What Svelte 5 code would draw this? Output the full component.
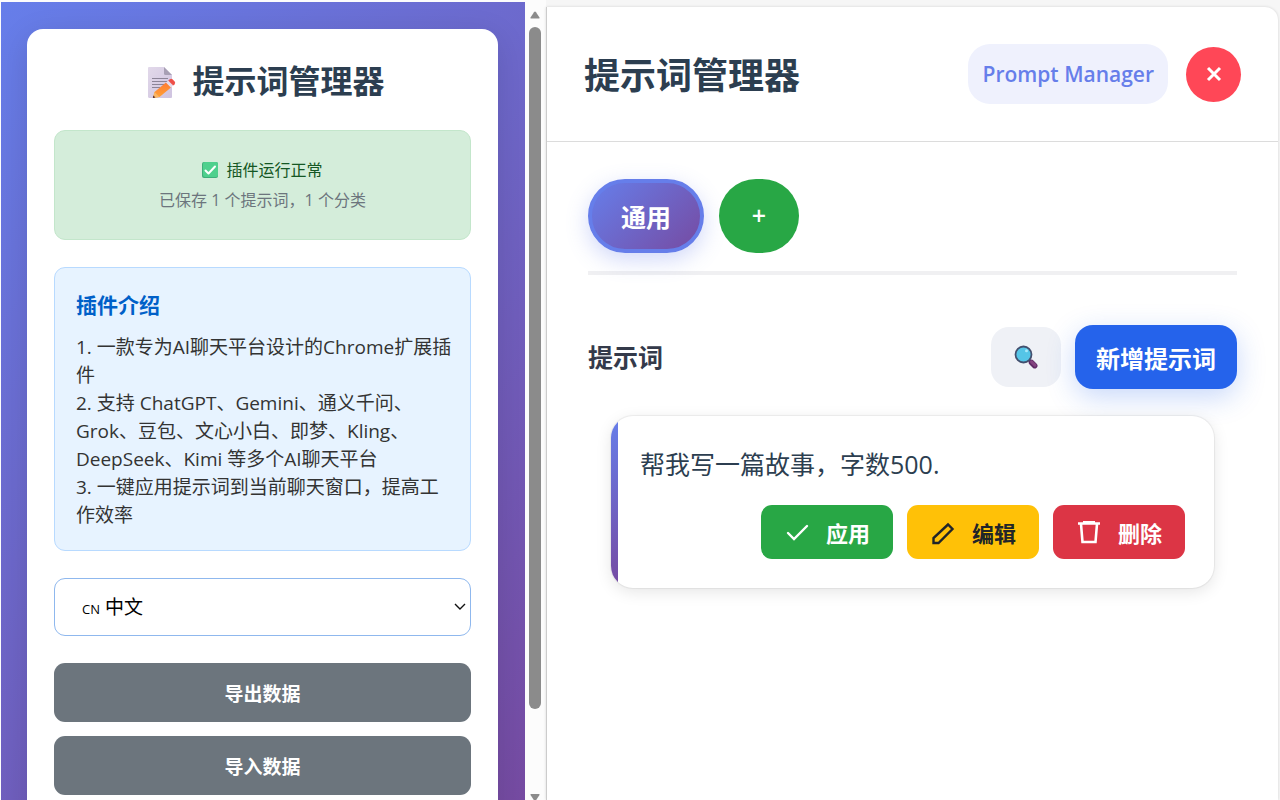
<script>
  const intro = [
    '1. 一款专为AI聊天平台设计的Chrome扩展插件',
    '2. 支持 ChatGPT、Gemini、通义千问、Grok、豆包、文心小白、即梦、Kling、DeepSeek、Kimi 等多个AI聊天平台',
    '3. 一键应用提示词到当前聊天窗口，提高工作效率'
  ];
  const prompts = ['帮我写一篇故事，字数500.'];
  let language = $state('zh');
</script>

<main class="page">
  <section class="popup">
    <div class="backdrop">
      <div class="sheet">
        <h1>
          <svg width="38" height="34" viewBox="-6 -2 38 34" aria-hidden="true">
            <defs>
              <linearGradient id="paper" x1="0" y1="0" x2="1" y2="1">
                <stop offset="0" stop-color="#e2d9ea" />
                <stop offset="1" stop-color="#cfc3e0" />
              </linearGradient>
              <linearGradient id="wood" x1="0" y1="0" x2="0" y2="1">
                <stop offset="0" stop-color="#ff7a35" />
                <stop offset="1" stop-color="#ffa436" />
              </linearGradient>
            </defs>
            <path d="M3 1h15l8 8v22a1 1 0 0 1-1 1H3a2 2 0 0 1-1-1V2a1 1 0 0 1 1-1z" fill="url(#paper)" />
            <path d="M18 1l8 8h-6.500a1.500 1.500 0 0 1-1.500-1.500z" fill="#a79fb4" />
            <path d="M6 12.500h16M6 15.500h16M6 18.500h12M6 21.500h8" stroke="#8c8498" stroke-width="1.200" />
            <path d="M8.500 26L20 16.500l5 5L13.500 31l-6.500 1z" fill="url(#wood)" />
            <path d="M8.500 26l5 5-6.500 1z" fill="#f9b565" />
            <path d="M7.400 29.500l2 2-2.600.5z" fill="#4a2a30" />
            <path d="M20 16.500l2.200-1.900 5 5L25 21.500z" fill="#e6dcec" />
            <path d="M22.200 14.600l1.700-1.400a2 2 0 0 1 2.600.1l2.100 2.200a2 2 0 0 1 0 2.700l-1.400 1.400z" fill="#ee5048" />
          </svg>
          提示词管理器
        </h1>

        <div class="status">
          <p class="ok">
            <svg width="16" height="16" viewBox="0 0 16 16" aria-hidden="true">
              <rect width="16" height="16" rx="2" fill="#3fae7a" />
              <rect x="1" width="15" height="15" rx="2" fill="#4fd08d" />
              <path d="M3.500 8.500l3 3 6.500-7" fill="none" stroke="#fff" stroke-width="2" stroke-linecap="round" stroke-linejoin="round" />
            </svg>
            插件运行正常
          </p>
          <p class="count">已保存 1 个提示词，1 个分类</p>
        </div>

        <div class="intro">
          <h2>插件介绍</h2>
          {#each intro as line}
            <p>{line}</p>
          {/each}
        </div>

        <div class="select">
          <select bind:value={language} aria-label="语言">
            <option value="zh">cn 中文</option>
          </select>
          <svg width="14" height="10" viewBox="0 0 14 10" aria-hidden="true">
            <path d="M2 2l5 5 5-5" fill="none" stroke="#111" stroke-width="1.400" />
          </svg>
        </div>

        <div class="data">
          <button type="button">导出数据</button>
          <button type="button">导入数据</button>
        </div>
      </div>
    </div>

    <div class="scrollbar" aria-hidden="true">
      <svg width="12" height="10" viewBox="0 0 12 10"><path d="M5 2.200a1.200 1.200 0 0 1 2 0L10.500 7.500q.5 1-.6 1H2.100q-1.100 0-.6-1z" fill="#8b8b8b" /></svg>
      <div class="track"><div class="thumb"></div></div>
      <svg width="12" height="8" viewBox="0 0 12 8"><path d="M5 8.300a1.200 1.200 0 0 0 2 0L10.500 3q.5-1-.6-1H2.100q-1.100 0-.6 1z" fill="#8b8b8b" /></svg>
    </div>
  </section>

  <section class="side">
    <div class="panel">
      <header>
        <h1>提示词管理器</h1>
        <span class="badge">Prompt Manager</span>
        <button type="button" class="close" aria-label="关闭">
          <svg width="16" height="16" viewBox="0 0 16 16"><path d="M2 2l12 12M14 2L2 14" stroke="#fff" stroke-width="3" /></svg>
        </button>
      </header>

      <div class="body">
        <nav>
          <button type="button" class="tab">通用</button>
          <button type="button" class="add">+</button>
        </nav>

        <div class="toolbar">
          <h2>提示词</h2>
          <button type="button" class="search" aria-label="搜索">
            <svg width="24" height="24" viewBox="0 0 24 24">
              <path d="M15 15l2 2" stroke="#493756" stroke-width="3" />
              <path d="M17.500 17.500l3.200 3.200" stroke="#5f2b66" stroke-width="5.500" stroke-linecap="round" />
              <path d="M17.500 16.800l3.500 3.400" stroke="#844380" stroke-width="3" stroke-linecap="round" />
              <circle cx="9.500" cy="9.500" r="8" fill="#55c5e7" stroke="#43506f" stroke-width="1.800" />
              <circle cx="12.500" cy="5.800" r="1.500" fill="#a6e8fa" />
            </svg>
          </button>
          <button type="button" class="new">新增提示词</button>
        </div>

        <div class="list">
          {#each prompts as prompt}
            <article>
              <p>{prompt}</p>
              <div class="actions">
                <button type="button" class="apply">
                  <svg width="26" height="26" viewBox="0 0 26 26" aria-hidden="true"><path d="M4 14l6 6L23 7" fill="none" stroke="#fff" stroke-width="2.400" stroke-linecap="round" /></svg>
                  应用
                </button>
                <button type="button" class="edit">
                  <svg width="26" height="26" viewBox="0 0 26 26" aria-hidden="true"><path d="M3.500 24v-5L18 5.500l4.500 4.500L8.500 24z" fill="none" stroke="#212529" stroke-width="2.400" /></svg>
                  编辑
                </button>
                <button type="button" class="remove">
                  <svg width="26" height="26" viewBox="0 0 26 26" aria-hidden="true"><path d="M2 4.500h22M7 3.200h12M5 5l1.500 18h13L21 5" fill="none" stroke="#fff" stroke-width="2.600" /></svg>
                  删除
                </button>
              </div>
            </article>
          {/each}
        </div>
      </div>
    </div>
  </section>
</main>

<style>
  :global(body) {
    background: #fff;
    font-family: 'Open Sans', 'Noto Sans CJK SC', sans-serif;
  }

  h1, h2, p {
    margin: 0;
  }

  button, select {
    border: 0;
    padding: 0;
    font: inherit;
    cursor: pointer;
  }

  svg {
    flex: none;
  }

  .page {
    display: grid;
    grid-template-columns: 546fr 734fr;
    height: 100vh;
    overflow: hidden;
  }

  .popup {
    display: flex;
    min-width: 0;
    min-height: 0;
    padding: 2px 0 0 1px;
    background: #fcfcfc;
  }

  .backdrop {
    flex: 1;
    min-width: 0;
    overflow: hidden;
    padding: 27px 27px 0 26px;
    background: linear-gradient(135deg, #667eea, #764ba2);
  }

  .sheet {
    box-sizing: border-box;
    display: flex;
    flex-direction: column;
    gap: 27px;
    min-height: 100vh;
    padding: 30px 27px;
    border-radius: 16px;
    background: #fff;
    box-shadow: 0 8px 32px rgba(0, 0, 0, 0.12);
  }

  .sheet h1 {
    display: flex;
    align-items: center;
    justify-content: center;
    gap: 14px;
    font-size: 32px;
    line-height: 44px;
    color: #2c3e50;
  }

  .status {
    padding: 24px;
    border: 1px solid #c3e6cb;
    border-radius: 11px;
    background: #d4edda;
    font-size: 16px;
    line-height: 30px;
    text-align: center;
  }

  .ok {
    display: flex;
    align-items: center;
    justify-content: center;
    gap: 8px;
    color: #155724;
  }

  .count {
    color: #6c757d;
  }

  .intro {
    padding: 20px 16px 21px 21px;
    border: 1px solid #b8daff;
    border-radius: 11px;
    background: #e7f3ff;
    font-size: 19px;
    line-height: 28px;
    color: #333;
  }

  .intro h2 {
    margin-bottom: 11px;
    font-size: 21px;
    line-height: 34px;
    color: #0060c8;
  }

  .select {
    display: grid;
    align-items: center;
  }

  .select > * {
    grid-area: 1 / 1;
  }

  .select svg {
    justify-self: end;
    margin-right: 4px;
    pointer-events: none;
  }

  select {
    appearance: none;
    height: 58px;
    padding: 0 27px;
    border: 1px solid #8fb8ee;
    border-radius: 11px;
    background: #fff;
    font-size: 19px;
    font-variant-caps: small-caps;
    color: #000;
  }

  .data {
    display: flex;
    flex-direction: column;
    gap: 14px;
  }

  .data button {
    height: 59px;
    border-radius: 11px;
    background: #6c757d;
    color: #fff;
    font-size: 19px;
    font-weight: 700;
  }

  .scrollbar {
    box-sizing: border-box;
    display: flex;
    flex-direction: column;
    align-items: center;
    gap: 7px;
    width: 21px;
    padding: 8px 2px 0 0;
  }

  .track {
    flex: 1;
    display: flex;
  }

  .thumb {
    width: 12px;
    height: 90%;
    border-radius: 6px;
    background: #8b8b8b;
  }

  .side {
    display: flex;
    min-width: 0;
    padding: 7px 2px 0 0;
    background: #f6f6f6;
  }

  .panel {
    flex: 1;
    min-width: 0;
    border-left: 1px solid #ccc;
    border-radius: 0 13px 0 0;
    background: #fff;
    box-shadow: 0 0 3px rgba(0, 0, 0, 0.15);
  }

  header {
    display: flex;
    align-items: center;
    gap: 18px;
    padding: 36px 37px;
    border-bottom: 1px solid #dcdcdc;
  }

  header h1 {
    flex: 1;
    padding-top: 4px;
    font-size: 36px;
    line-height: 58px;
    color: #2c3e50;
  }

  .badge {
    padding: 0 14px;
    border-radius: 22px;
    background: #eff1fd;
    font-size: 21px;
    line-height: 60px;
    font-weight: 600;
    color: #667eea;
  }

  .close {
    display: grid;
    place-items: center;
    width: 55px;
    height: 55px;
    border-radius: 50%;
    background: #ff4757;
  }

  .body {
    padding: 37px 41px;
  }

  nav {
    display: flex;
    gap: 15px;
    padding-bottom: 18px;
    border-bottom: 4px solid #f0f0f2;
  }

  nav button {
    box-sizing: border-box;
    height: 74px;
    border-radius: 37px;
    color: #fff;
    font-size: 25px;
    font-weight: 600;
  }

  .tab {
    padding: 0 29px;
    border: 4px solid #667eea;
    background: linear-gradient(135deg, #667eea, #764ba2);
    box-shadow: 0 7px 22px rgba(102, 126, 234, 0.3);
  }

  .add {
    width: 80px;
    padding-bottom: 3px;
    background: #28a745;
  }

  .toolbar {
    display: flex;
    align-items: center;
    gap: 14px;
    margin-top: 50px;
  }

  .toolbar h2 {
    flex: 1;
    font-size: 25px;
    line-height: 36px;
    color: #343a4a;
  }

  .search {
    display: grid;
    place-items: center;
    width: 70px;
    height: 60px;
    border-radius: 18px;
    background: #eff1f6;
  }

  .new {
    height: 64px;
    padding: 0 21px;
    border-radius: 18px;
    background: #2563eb;
    box-shadow: 0 8px 28px rgba(37, 99, 235, 0.25);
    color: #fff;
    font-size: 24px;
    font-weight: 700;
  }

  .list {
    padding: 27px 23px;
  }

  article {
    position: relative;
    overflow: hidden;
    padding: 29px;
    border-radius: 22px;
    background: #fff;
    box-shadow: 0 0 1px 1px rgba(0, 0, 0, 0.06), 0 4px 16px rgba(0, 0, 0, 0.1);
  }

  article::before {
    content: '';
    position: absolute;
    inset: 0 auto 0 0;
    width: 7px;
    background: linear-gradient(#667eea, #764ba2);
  }

  article p {
    font-size: 25px;
    line-height: 38px;
    color: #2c3e50;
  }

  .actions {
    display: flex;
    justify-content: flex-end;
    gap: 14px;
    margin-top: 22px;
  }

  .actions button {
    display: flex;
    align-items: center;
    gap: 16px;
    height: 54px;
    padding: 0 23px;
    border-radius: 11px;
    color: #fff;
    font-size: 22px;
    font-weight: 600;
  }

  .actions .apply {
    background: #28a745;
  }

  .actions .edit {
    background: #ffc107;
    color: #212529;
  }

  .actions .remove {
    background: #dc3545;
  }
</style>
